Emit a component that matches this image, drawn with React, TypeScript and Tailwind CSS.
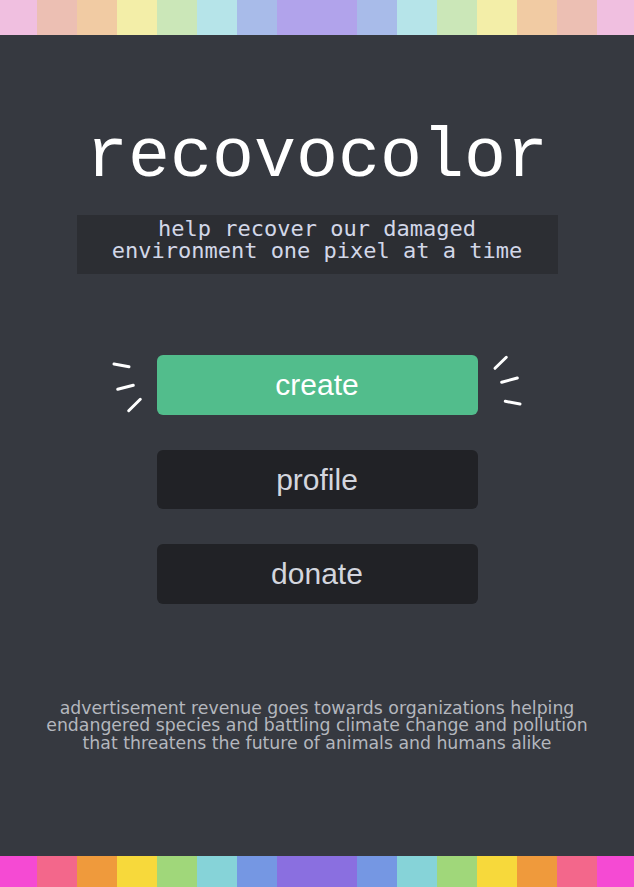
const topColors = [
  "#f0bfe0",
  "#ecbfb3",
  "#f1cba3",
  "#f3eea8",
  "#cbe7b8",
  "#b6e4e9",
  "#a8bbe9",
  "#b1a3eb",
  "#b1a3eb",
  "#a8bbe9",
  "#b6e4e9",
  "#cbe7b8",
  "#f3eea8",
  "#f1cba3",
  "#ecbfb3",
  "#f0bfe0",
];

const bottomColors = [
  "#f54ad3",
  "#f3678b",
  "#ef9a3c",
  "#f7d93b",
  "#a0d77a",
  "#86d3d8",
  "#7597e3",
  "#8a6fe0",
  "#8a6fe0",
  "#7597e3",
  "#86d3d8",
  "#a0d77a",
  "#f7d93b",
  "#ef9a3c",
  "#f3678b",
  "#f54ad3",
];

// a row of 40px squares, centred so the ends get clipped a little
function Stripe({ colors, className }: { colors: string[]; className: string }) {
  return (
    <div className={`flex justify-center overflow-hidden ${className}`}>
      {colors.map((c, i) => (
        <div key={i} className="h-full w-10 shrink-0" style={{ backgroundColor: c }} />
      ))}
    </div>
  );
}

/* little "sparkle" dashes either side of the create button */
function Sparks({ side }: { side: "left" | "right" }) {
  const lines =
    side === "left"
      ? [
          [3, 9, 18, 11.7],
          [6.7, 34.3, 22.3, 30.3],
          [17.7, 55.7, 29.3, 44.3],
        ]
      : [
          [4, 13.3, 15.3, 2.3],
          [10.7, 27.3, 26.3, 23],
          [14.3, 46.3, 29, 49],
        ];
  return (
    <svg
      width="32"
      height="60"
      viewBox="0 0 32 60"
      className={`absolute top-0 ${side === "left" ? "-left-[46px]" : "-right-[45px]"}`}
      aria-hidden="true"
    >
      {lines.map(([x1, y1, x2, y2], i) => (
        <line key={i} x1={x1} y1={y1} x2={x2} y2={y2} stroke="#fff" strokeWidth="3" strokeLinecap="round" />
      ))}
    </svg>
  );
}

function MenuButton({ label, primary }: { label: string; primary?: boolean }) {
  return (
    <button
      className={`flex h-[59.5px] w-[321px] items-center justify-center rounded-md font-['Liberation_Sans',Arial,sans-serif] text-[30px] ${
        primary ? "bg-[#52bd8c] text-white" : "bg-[#212226] text-[#d3d6de]"
      }`}
    >
      {label}
    </button>
  );
}

export default function App() {
  return (
    <div className="flex min-h-screen flex-col bg-[#363940]">
      <Stripe colors={topColors} className="h-[35px]" />

      <main className="flex h-[821px] flex-col items-center">
        <h1 className="mt-[83px] font-['Courier_New','Nimbus_Mono_PS','FreeMono','Liberation_Mono',monospace] text-[70px] leading-[79px] text-white">
          recovocolor
        </h1>
        <p className="mt-[18px] h-[59px] w-[481px] bg-[#2c2e33] pt-[3px] text-center font-['DejaVu_Sans_Mono',monospace] text-[22px] leading-[21.5px] text-[#d2d7e8]">
          help recover our damaged
          <br />
          environment one pixel at a time
        </p>

        <div className="mt-[81px] flex flex-col items-center gap-[35px]">
          <div className="relative">
            <Sparks side="left" />
            <MenuButton label="create" primary />
            <Sparks side="right" />
          </div>
          <MenuButton label="profile" />
          <MenuButton label="donate" />
        </div>

        <p className="mt-[96px] text-center font-['DejaVu_Sans',Verdana,sans-serif] text-[17.3px] leading-[17.5px] text-[#b4b7be]">
          advertisement revenue goes towards organizations helping
          <br />
          endangered species and battling climate change and pollution
          <br />
          that threatens the future of animals and humans alike
        </p>
      </main>

      <Stripe colors={bottomColors} className="h-[31px]" />
    </div>
  );
}
